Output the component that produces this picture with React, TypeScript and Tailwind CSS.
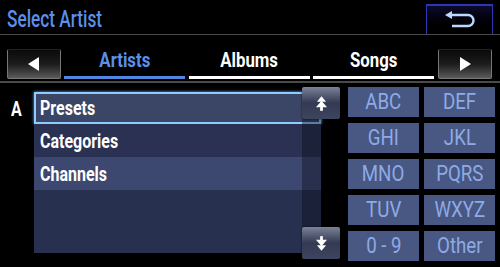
import React from "react";

const font = { fontFamily: 'Roboto, "Noto Sans", sans-serif' };

function Tab({ label, active }: { label: string; active?: boolean }) {
  return (
    <div className="w-[121px] h-[45px] flex flex-col justify-end items-center">
      <span
        className={`inline-block scale-x-80 text-[21px] font-bold leading-none pb-[5px] ${active ? "text-[#5b8fe8]" : "text-white"}`}
      >
        {label}
      </span>
      <div className={`w-full h-[3px] ${active ? "bg-[#4f86e0]" : "bg-white"}`} />
    </div>
  );
}

function ArrowButton({ dir }: { dir: "left" | "right" }) {
  return (
    <div className="w-[54px] h-[30px] flex items-center justify-center rounded-[2px] border border-[#777] border-t-[#222] bg-gradient-to-b from-[#0a0a0a] via-[#1c1c1c] to-[#5a5a5a]">
      <svg width="12" height="14" viewBox="0 0 12 14">
        {dir === "left" ? (
          <polygon points="11,0 11,14 0,7" fill="#fff" />
        ) : (
          <polygon points="1,0 1,14 12,7" fill="#fff" />
        )}
      </svg>
    </div>
  );
}

function ScrollButton({ dir }: { dir: "up" | "down" }) {
  return (
    <div className="w-[38px] h-[32px] flex items-center justify-center rounded-[2px] bg-gradient-to-b from-[#7c8298] via-[#343a52] to-[#3e4560] shadow-[0_0_2px_rgba(0,0,0,0.8)]">
      <svg width="11" height="15" viewBox="0 0 12 16">
        {dir === "up" ? (
          <>
            <polygon points="6,0 11,6 1,6" fill="#fff" />
            <polygon points="6,5 12,12 0,12" fill="#fff" />
            <rect x="4.5" y="11" width="3" height="5" fill="#fff" />
          </>
        ) : (
          <>
            <rect x="4.5" y="0" width="3" height="5" fill="#fff" />
            <polygon points="0,4 12,4 6,11" fill="#fff" />
            <polygon points="1,10 11,10 6,16" fill="#fff" />
          </>
        )}
      </svg>
    </div>
  );
}

const keys = ["ABC", "DEF", "GHI", "JKL", "MNO", "PQRS", "TUV", "WXYZ", "0 - 9", "Other"];

function Row({ label, cls }: { label: string; cls: string }) {
  return (
    <div className={`flex items-center ${cls}`}>
      <span className="inline-block scale-x-80 origin-left text-white text-[20px] font-bold leading-none">
        {label}
      </span>
    </div>
  );
}

export default function App() {
  return (
    <div className="w-[500px] h-[267px] bg-black overflow-hidden flex flex-col" style={font}>
      {/* header */}
      <div className="h-[35px] flex justify-between border-b border-[#4a4a4a]">
        <div className="pl-[7px] pt-[8px]">
          <span className="inline-block scale-x-75 origin-left text-[23px] leading-none text-[#5b8fe8] font-medium">
            Select Artist
          </span>
        </div>
        <div className="mt-[4px] mr-[7px] w-[67px] h-[30px] border-t-2 border-x border-[#2e34b8] border-b-0 bg-gradient-to-b from-[#0c0c2a] to-black flex items-center justify-center">
          <svg width="32" height="18" viewBox="0 0 32 18" fill="none">
            <path d="M6 4 H24 A5.5 5.5 0 0 1 24 15 H8" stroke="#bcd8ff" strokeWidth="2.4" />
            <polygon points="1,4 8,0 8,8" fill="#bcd8ff" />
          </svg>
        </div>
      </div>

      {/* tabs */}
      <div className="h-[48px] flex items-end px-[7px] pb-[2px] border-b-2 border-[#4a4a4a]">
        <ArrowButton dir="left" />
        <div className="w-[3px]" />
        <Tab label="Artists" active />
        <div className="w-[4px]" />
        <Tab label="Albums" />
        <div className="w-[3px]" />
        <Tab label="Songs" />
        <div className="w-[4px]" />
        <ArrowButton dir="right" />
      </div>

      {/* body */}
      <div className="flex-1 flex pt-[4px]">
        <div className="w-[34px] pt-[12px] pl-[11px]">
          <span className="inline-block scale-x-80 origin-left text-white text-[20px] font-bold leading-none">A</span>
        </div>
        <div className="relative w-[306px] h-[174px]">
          <div className="absolute left-0 top-[5px] w-[287px] h-[161px] bg-[#283050] flex flex-col">
            <Row label="Presets" cls="h-[32px] bg-[#3b4566] border-2 border-[#8ecbff] shadow-[0_0_3px_#6ab0ff] pl-[4px]" />
            <Row label="Categories" cls="h-[33px] bg-[#2a3152] pl-[6px]" />
            <Row label="Channels" cls="h-[33px] bg-[#3d4870] pl-[6px]" />
            <div className="flex-1" />
            <div className="absolute right-0 top-0 bottom-0 w-[19px] bg-[rgba(10,12,25,0.4)]" />
          </div>
          <div className="absolute left-[268px] top-0">
            <ScrollButton dir="up" />
          </div>
          <div className="absolute left-[268px] top-[140px]">
            <ScrollButton dir="down" />
          </div>
        </div>
        <div className="ml-[8px] grid grid-cols-[71px_71px] gap-x-[5px] gap-y-[6px] content-start">
          {keys.map((k) => (
            <div key={k} className="h-[30px] bg-[#485882] flex items-center justify-center">
              <span className="inline-block scale-x-85 text-[#8eaae6] text-[22px] leading-none whitespace-pre">{k}</span>
            </div>
          ))}
        </div>
      </div>
    </div>
  );
}
